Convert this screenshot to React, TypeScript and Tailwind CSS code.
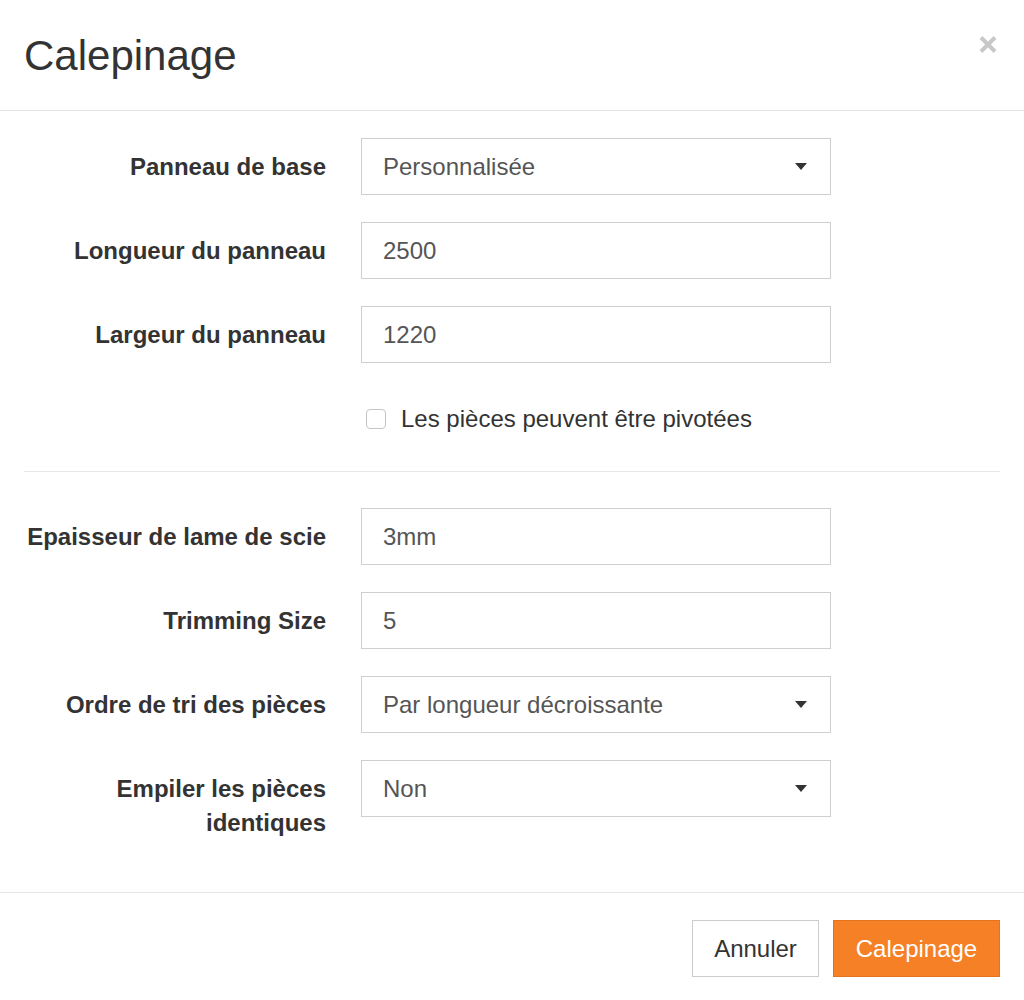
import React from "react";

type Field = {
  label: React.ReactNode;
  value: string;
  select?: boolean;
};

const topFields: Field[] = [
  { label: "Panneau de base", value: "Personnalisée", select: true },
  { label: "Longueur du panneau", value: "2500" },
  { label: "Largeur du panneau", value: "1220" },
];

const bottomFields: Field[] = [
  { label: "Epaisseur de lame de scie", value: "3mm" },
  { label: "Trimming Size", value: "5" },
  { label: "Ordre de tri des pièces", value: "Par longueur décroissante", select: true },
  {
    label: (
      <>
        Empiler les pièces
        <br />
        identiques
      </>
    ),
    value: "Non",
    select: true,
  },
];

const Caret = () => (
  <svg width="12" height="7" viewBox="0 0 12 7" className="shrink-0">
    <path d="M0 0H12L6 7Z" fill="#333" />
  </svg>
);

const FormRow = ({ field, last }: { field: Field; last?: boolean }) => (
  <div className={`flex items-start ${last ? "" : "mb-[27px]"}`}>
    {/* label column */}
    <div className="w-[302px] shrink-0 pt-[12px] text-right text-[24px] leading-[34px] font-bold text-[#333] whitespace-nowrap">
      {field.label}
    </div>
    {/* control */}
    <div className="ml-[35px] w-[470px] h-[57px] border border-[#cfcfcf] bg-white flex items-center justify-between pl-[21px] pr-[23px] text-[24px] text-[#555]">
      <span>{field.value}</span>
      {field.select && <Caret />}
    </div>
  </div>
);

export default function App() {
  return (
    <div className="w-[1024px] h-[1000px] bg-white font-['Liberation_Sans',Arial,sans-serif] text-[#333]">
      {/* Header */}
      <div className="h-[111px] border-b border-[#e5e5e5] flex justify-between pl-[24px] pr-[26px]">
        <h3 className="pt-[33px] text-[42px] leading-[46px] font-normal text-[#333]">Calepinage</h3>
        <svg width="20" height="19" viewBox="0 0 20 19" className="mt-[35px]">
          <path d="M3 2.5L17 16.5M17 2.5L3 16.5" stroke="#c8c8c8" strokeWidth="4" />
        </svg>
      </div>

      {/* Body */}
      <div className="pt-[27px] pb-[52px] px-[24px]">
        {topFields.map((f, i) => (
          <FormRow key={i} field={f} />
        ))}

        <div className="flex items-center h-[46px] pt-[12px] pl-[342px]">
          <span className="w-[20px] h-[20px] rounded-[4px] border border-[#c4c4c4] bg-white" />
          <span className="ml-[15px] text-[24px] leading-[34px] text-[#333]">Les pièces peuvent être pivotées</span>
        </div>

        <hr className="mt-[35px] mb-[36px] border-0 border-t border-[#e8e8e8]" />

        {bottomFields.map((f, i) => (
          <FormRow key={i} field={f} last={i === bottomFields.length - 1} />
        ))}
      </div>

      {/* Footer */}
      <div className="border-t border-[#e5e5e5] pt-[27px] px-[24px] flex justify-end gap-[14px]">
        <button className="w-[127px] h-[57px] border border-[#cccccc] bg-white text-[24px] text-[#333]">
          Annuler
        </button>
        <button className="w-[167px] h-[57px] border border-[#e3731c] bg-[#f58025] text-[24px] text-white">
          Calepinage
        </button>
      </div>
    </div>
  );
}
